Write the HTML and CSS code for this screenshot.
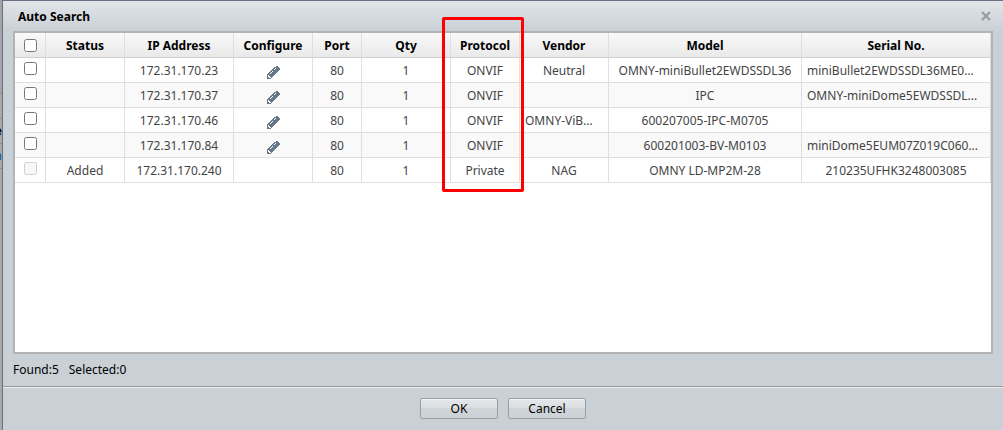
FILE: index.html
```html
<!DOCTYPE html>
<html lang="en">
  <head>
    <meta charset="UTF-8" />
    <meta name="viewport" content="width=device-width, initial-scale=1.0" />
    <title>Auto Search</title>
    <link rel="stylesheet" href="styles.css">
  </head>
  <body>
    <svg class="sprite" aria-hidden="true">
      <symbol id="pencil" viewBox="0 0 13 13">
        <path fill="#667788" d="M9 0h2v1h1v1h1v2h-1v1h-1v1h-1v1h-1v1h-1v1h-1v1h-1v1h-1v1h-1v1H0V8h1V7h1V6h1V5h1V4h1V3h1V2h1V1h2z" />
        <path fill="#fff" d="M8 2h1v1h-1zM7 3h1v1h-1zM5 5h1v1h-1zM4 6h1v1h-1zM3 7h1v1h-1zM1 9h1v1h1v1h1v1h-2v-1h-1z" />
      </symbol>
    </svg>
    <div class="page">
      <div class="backdrop" aria-hidden="true">
        <div class="strip-head"></div>
        <div class="strip-row"></div>
        <div class="strip-row strip-text">e</div>
        <div class="strip-row strip-link">n</div>
      </div>
      <div class="dialog" role="dialog" aria-labelledby="dialog-title">
        <div class="dialog-header">
          <h1 id="dialog-title">Auto Search</h1>
          <button class="close" aria-label="Close">
            <svg width="10" height="10" viewBox="0 0 10 10"><path d="M1 1l8 8M9 1l-8 8" stroke="#989da2" stroke-width="2.4" /></svg>
          </button>
        </div>
        <div class="grid">
          <table>
            <colgroup>
              <col class="col-check"><col class="col-status"><col class="col-ip"><col class="col-configure"><col class="col-port">
              <col class="col-qty"><col class="col-protocol"><col class="col-vendor"><col class="col-model"><col class="col-serial">
            </colgroup>
            <thead>
              <tr>
                <th><input type="checkbox" aria-label="Select all"></th>
                <th>Status</th>
                <th>IP Address</th>
                <th>Configure</th>
                <th>Port</th>
                <th>Qty</th>
                <th class="marked">Protocol<span class="marker"></span></th>
                <th>Vendor</th>
                <th>Model</th>
                <th>Serial No.</th>
              </tr>
            </thead>
            <tbody>
              <tr>
                <td><input type="checkbox" aria-label="Select 172.31.170.23"></td>
                <td></td>
                <td>172.31.170.23</td>
                <td><button class="edit" aria-label="Configure"><svg width="13" height="13"><use href="#pencil" /></svg></button></td>
                <td>80</td>
                <td>1</td>
                <td>ONVIF</td>
                <td>Neutral</td>
                <td>OMNY-miniBullet2EWDSSDL36</td>
                <td class="clipped">miniBullet2EWDSSDL36ME0...</td>
              </tr>
              <tr>
                <td><input type="checkbox" aria-label="Select 172.31.170.37"></td>
                <td></td>
                <td>172.31.170.37</td>
                <td><button class="edit" aria-label="Configure"><svg width="13" height="13"><use href="#pencil" /></svg></button></td>
                <td>80</td>
                <td>1</td>
                <td>ONVIF</td>
                <td></td>
                <td>IPC</td>
                <td class="clipped">OMNY-miniDome5EWDSSDL...</td>
              </tr>
              <tr>
                <td><input type="checkbox" aria-label="Select 172.31.170.46"></td>
                <td></td>
                <td>172.31.170.46</td>
                <td><button class="edit" aria-label="Configure"><svg width="13" height="13"><use href="#pencil" /></svg></button></td>
                <td>80</td>
                <td>1</td>
                <td>ONVIF</td>
                <td class="clipped">OMNY-ViB...</td>
                <td>600207005-IPC-M0705</td>
                <td></td>
              </tr>
              <tr>
                <td><input type="checkbox" aria-label="Select 172.31.170.84"></td>
                <td></td>
                <td>172.31.170.84</td>
                <td><button class="edit" aria-label="Configure"><svg width="13" height="13"><use href="#pencil" /></svg></button></td>
                <td>80</td>
                <td>1</td>
                <td>ONVIF</td>
                <td></td>
                <td>600201003-BV-M0103</td>
                <td class="clipped">miniDome5EUM07Z019C060...</td>
              </tr>
              <tr>
                <td><input type="checkbox" aria-label="Select 172.31.170.240" disabled></td>
                <td>Added</td>
                <td>172.31.170.240</td>
                <td></td>
                <td>80</td>
                <td>1</td>
                <td>Private</td>
                <td>NAG</td>
                <td>OMNY LD-MP2M-28</td>
                <td>210235UFHK3248003085</td>
              </tr>
            </tbody>
          </table>
        </div>
        <div class="summary">
          <span>Found:5</span>
          <span>Selected:0</span>
        </div>
        <div class="dialog-footer">
          <button class="btn">OK</button>
          <button class="btn">Cancel</button>
        </div>
      </div>
    </div>
  </body>
</html>
```

FILE: styles.css
```css
* {
  box-sizing: border-box;
}
body {
  margin: 0;
  font-family: "Noto Sans", "Open Sans", sans-serif;
  font-size: 12px;
  line-height: 16px;
  color: #000;
}
button {
  font: inherit;
  color: inherit;
  cursor: pointer;
}
.sprite {
  display: none;
}
.page {
  display: flex;
  min-height: 100vh;
}
.backdrop {
  width: 2px;
  overflow: hidden;
  background: #aaa;
}
.strip-head {
  height: 94px;
  background: #a5a5a7;
  border-bottom: 1px solid #8f8f8f;
}
.strip-row {
  display: flex;
  justify-content: flex-end;
  align-items: center;
  height: 25px;
  border-bottom: 1px solid #8f8f8f;
}
.strip-text {
  font-weight: bold;
}
.strip-link {
  color: #0055a5;
}
.dialog {
  flex: 1;
  min-width: 0;
  display: flex;
  flex-direction: column;
  border: 1px solid #667080;
  border-width: 1px 0 0 1px;
  background: #c9d0d6;
}
.dialog-header {
  display: flex;
  justify-content: space-between;
  align-items: center;
  height: 30px;
  padding: 0 12px 0 15px;
  background: linear-gradient(#e2e5e8, #c9d0d6);
}
.dialog-header h1 {
  margin: 0;
  padding-top: 2px;
  font-size: 12px;
}
.close {
  display: flex;
  padding: 0;
  border: none;
  background: none;
}
.grid {
  flex: 1;
  margin: 0 10px;
  border: 2px solid #b3b3b3;
  background: #fff;
}
table {
  width: 100%;
  table-layout: fixed;
  border-collapse: separate;
  border-spacing: 0;
}
.col-check {
  width: 31px;
}
.col-status,
.col-configure {
  width: 79px;
}
.col-ip {
  width: 109px;
}
.col-port {
  width: 49px;
}
.col-qty,
.col-vendor {
  width: 89px;
}
.col-protocol {
  width: 69px;
}
.col-serial {
  width: 189px;
}
th,
td {
  height: 25px;
  padding: 2px 0 0;
  text-align: center;
  white-space: nowrap;
  border-right: 1px solid #dedede;
  border-bottom: 1px solid #dedede;
}
th {
  background: linear-gradient(#f9f9f9, #e9e9e9);
  border-bottom-color: #cfcfcf;
}
td {
  overflow: hidden;
  color: #444;
}
tbody tr:nth-child(even) {
  background: #f9f9f9;
}
.clipped {
  text-align: left;
  padding-left: 5px;
}
input[type="checkbox"] {
  display: block;
  width: 13px;
  height: 13px;
  margin: 0 auto 2px;
}
td input[type="checkbox"] {
  margin-bottom: 6px;
}
.edit {
  display: flex;
  margin: 2px auto 0;
  padding: 0;
  border: none;
  background: none;
}
/* red frame around the Protocol column */
.marked {
  position: relative;
}
.marker {
  position: absolute;
  top: -16px;
  left: -9px;
  right: -5px;
  height: 175px;
  border: 3px solid #f00;
  border-radius: 2px;
  pointer-events: none;
}
.summary {
  display: flex;
  gap: 10px;
  padding: 8px 10px;
}
.dialog-footer {
  display: flex;
  justify-content: center;
  gap: 10px;
  padding: 11px 0;
  border-top: 1px solid #999;
  box-shadow: inset 0 1px #eee;
}
.btn {
  width: 78px;
  height: 21px;
  padding: 0;
  border: 1px solid #999fa4;
  border-radius: 2px;
  background: linear-gradient(#e4e7ea, #dadee1 50%, #d0d5da 50%, #cbd1d6);
  box-shadow: inset 0 1px #f4f5f6;
}
```
